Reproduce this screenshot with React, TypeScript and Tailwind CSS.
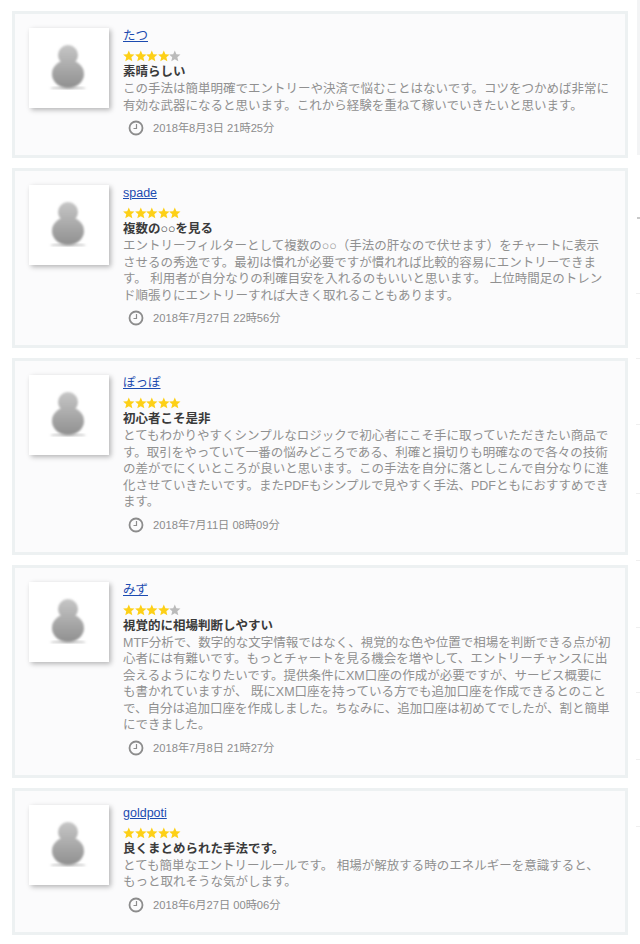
const reviews = [
  {
    name: 'たつ',
    stars: 4,
    title: '素晴らしい',
    body: ['この手法は簡単明確でエントリーや決済で悩むことはないです。コツをつかめば非常に', '有効な武器になると思います。これから経験を重ねて稼いでいきたいと思います。'],
    date: '2018年8月3日 21時25分',
  },
  {
    name: 'spade',
    stars: 5,
    title: '複数の○○を見る',
    body: ['エントリーフィルターとして複数の○○（手法の肝なので伏せます）をチャートに表示', 'させるの秀逸です。最初は慣れが必要ですが慣れれば比較的容易にエントリーできま', 'す。 利用者が自分なりの利確目安を入れるのもいいと思います。 上位時間足のトレン', 'ド順張りにエントリーすれば大きく取れることもあります。'],
    date: '2018年7月27日 22時56分',
  },
  {
    name: 'ぽっぽ',
    stars: 5,
    title: '初心者こそ是非',
    body: ['とてもわかりやすくシンプルなロジックで初心者にこそ手に取っていただきたい商品で', 'す。取引をやっていて一番の悩みどころである、利確と損切りも明確なので各々の技術', 'の差がでにくいところが良いと思います。この手法を自分に落としこんで自分なりに進', '化させていきたいです。またPDFもシンプルで見やすく手法、PDFともにおすすめでき', 'ます。'],
    date: '2018年7月11日 08時09分',
  },
  {
    name: 'みず',
    stars: 4,
    title: '視覚的に相場判断しやすい',
    body: ['MTF分析で、数字的な文字情報ではなく、視覚的な色や位置で相場を判断できる点が初', '心者には有難いです。もっとチャートを見る機会を増やして、エントリーチャンスに出', '会えるようになりたいです。提供条件にXM口座の作成が必要ですが、サービス概要に', 'も書かれていますが、 既にXM口座を持っている方でも追加口座を作成できるとのこと', 'で、自分は追加口座を作成しました。ちなみに、追加口座は初めてでしたが、割と簡単', 'にできました。'],
    date: '2018年7月8日 21時27分',
  },
  {
    name: 'goldpoti',
    stars: 5,
    title: '良くまとめられた手法です。',
    body: ['とても簡単なエントリールールです。 相場が解放する時のエネルギーを意識すると、', 'もっと取れそうな気がします。'],
    date: '2018年6月27日 00時06分',
  },
]

// faint rules of the next column, cut off by the right edge
const sideRules = [293, 358, 424, 493, 560, 627, 692, 759, 826]

const Avatar = () => (
  <div className="w-20 h-20 shrink-0 bg-white shadow-[2px_2px_5px_rgba(0,0,0,0.28)]">
    <svg width="80" height="80" viewBox="0 0 80 80">
      <defs>
        <linearGradient id="person" gradientUnits="userSpaceOnUse" x1="0" y1="17" x2="0" y2="60">
          <stop offset="0" stopColor="#c6c6c6" />
          <stop offset="1" stopColor="#909090" />
        </linearGradient>
        <filter id="soft">
          <feGaussianBlur stdDeviation="0.9" />
        </filter>
      </defs>
      <ellipse cx="39" cy="60" rx="18" ry="1.2" fill="#c0c0c0" filter="url(#soft)" />
      <g filter="url(#soft)" fill="url(#person)">
        <circle cx="39" cy="27" r="10" />
        <ellipse cx="39" cy="46" rx="16" ry="14" />
      </g>
    </svg>
  </div>
)

const Stars = ({ count }: { count: number }) => (
  <div className="flex h-[12px] mt-[5px]">
    {[1, 2, 3, 4, 5].map((i) => (
      <svg key={i} width="11.6" height="12" viewBox="0 0 24 24" fill={i <= count ? '#fdd017' : '#bbbbbb'}>
        <path d="M12 .5l3.300 7.900 8.500.7-6.500 5.600 2 8.300L12 18.600l-7.300 4.400 2-8.300L.2 9.100l8.500-.7z" />
      </svg>
    ))}
  </div>
)

const ClockIcon = () => (
  <svg width="16" height="16" viewBox="0 0 16 16" fill="none" stroke="#8c8c8c">
    <circle cx="8" cy="8" r="6.500" strokeWidth="1.800" />
    <path d="M8.500 4v4.500H5.500" strokeWidth="1.200" />
  </svg>
)

const ReviewCard = ({ name, stars, title, body, date }: (typeof reviews)[number]) => (
  <div className="border-[3px] border-[#edf1f2] bg-[#fbfbfc] pl-[14px] pr-2 pt-[14px] pb-[19px] flex gap-[14px]">
    <Avatar />
    <div className="flex-1 min-w-0">
      <a href="#" className="block text-[12.500px] leading-[17px] text-[#1c4bb0] underline">
        {name}
      </a>
      <Stars count={stars} />
      <div className="text-[12.500px] leading-[18px] mt-[1px] font-bold text-[#3a3a3a]">{title}</div>
      <div className="text-[12.500px] leading-[16.500px] text-[#909090] whitespace-nowrap">
        {body.map((line) => (
          <div key={line} className="h-[16.500px]">
            {line}
          </div>
        ))}
      </div>
      <div className="flex items-center gap-[9px] ml-[5px] mt-[6px] text-[11.200px] leading-[16px] text-[#8c8c8c]">
        <ClockIcon />
        <span>{date}</span>
      </div>
    </div>
  </div>
)

const App = () => {
  return (
    <div
      className="relative w-[640px] h-[944px] overflow-hidden bg-white pl-3 pr-3 pt-[11px] flex flex-col gap-[10px]"
      style={{ fontFamily: '"Liberation Sans", "Noto Sans CJK JP", sans-serif' }}
    >
      {reviews.map((r) => (
        <ReviewCard key={r.name} {...r} />
      ))}
      <div className="absolute right-0 top-0 w-[3px] h-[155px] bg-[#f3f4f5]" />
      {sideRules.map((top) => (
        <div key={top} className="absolute right-0 w-1 h-px bg-[#efefef]" style={{ top }} />
      ))}
      <div className="absolute right-0 top-[217px] w-[3px] h-[2px] bg-[#c8c8c8]" />
    </div>
  )
}

export default App
